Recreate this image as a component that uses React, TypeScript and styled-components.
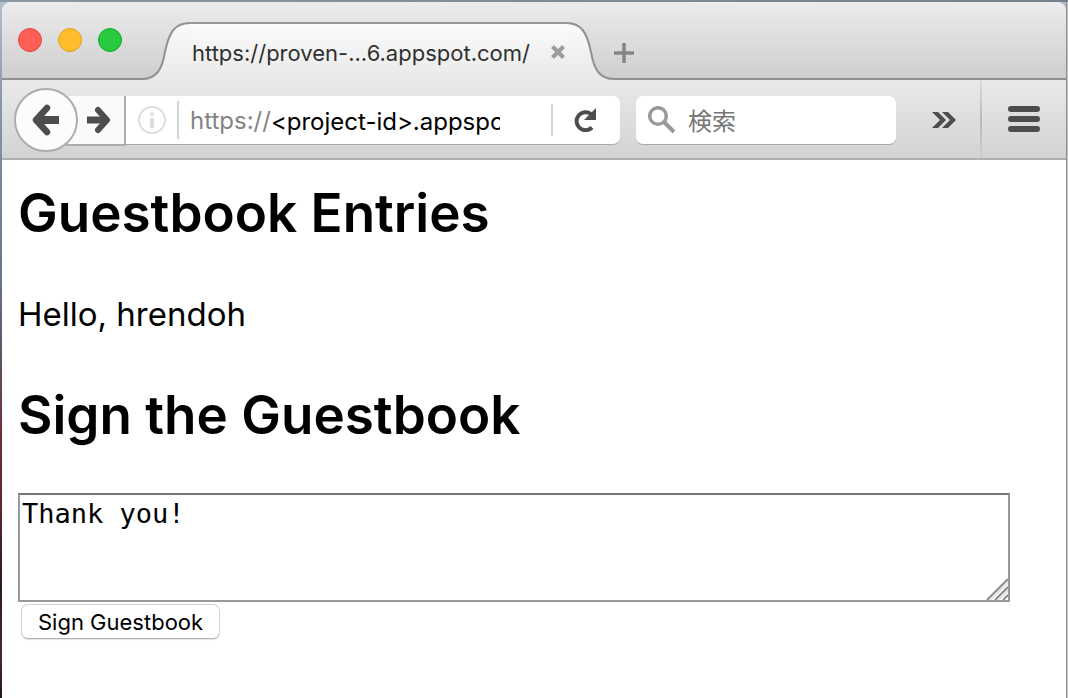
import React from "react";
import styled, { createGlobalStyle } from "styled-components";

const uiFont = `Inter, "Noto Sans CJK JP", sans-serif`;
const pageFont = `Inter, "Noto Sans CJK JP", sans-serif`;

const GlobalStyle = createGlobalStyle`
  * { box-sizing: border-box; }
  body { margin: 0; background: #fff; }
  button, input, textarea { margin: 0; font: inherit; color: inherit; }
  svg { display: block; flex: none; }
`;

const Desktop = styled.div`
  min-height: 100vh;
  display: flex;
  padding: 2px 2px 0;
  background:
    linear-gradient(90deg, #8a98a6, #72818e) 0 0 / 100% 2px no-repeat,
    linear-gradient(90deg, #8e8e8e 50%, #c4c4c4 50%) 100% 0 / 2px 100% no-repeat,
    linear-gradient(#b4c0cc 0, #8795a8 15%, #66758c 40%, #5e5063 52%, #6f3136 62%, #60282b 72%, #2a1a22 84%, #4a2a2e 94%, #22161c 100%);
`;

const Window = styled.div`
  flex: 1;
  min-width: 0;
  display: flex;
  flex-direction: column;
  background: #fff;
  border-radius: 9px 9px 0 0;
  overflow: hidden;
`;

const TabStrip = styled.header`
  height: 78px;
  display: flex;
  align-items: flex-end;
  background: linear-gradient(#ececec, #cecece);
  border-bottom: 2px solid #8f8f8f;
`;

const Lights = styled.div`
  width: 140px;
  align-self: stretch;
  display: flex;
  gap: 16px;
  padding: 26px 0 0 16px;
`;

const Light = styled.button<{ $fill: string; $edge: string }>`
  width: 24px;
  height: 24px;
  padding: 0;
  border: 1px solid ${(p) => p.$edge};
  border-radius: 50%;
  background: ${(p) => p.$fill};
`;

const Tab = styled.div`
  position: relative;
  flex: 0 1 472px;
  min-width: 0;
  height: 58px;
  margin-bottom: -2px;
  display: flex;
`;

const TabBody = styled.div`
  flex: 1;
  min-width: 0;
  display: flex;
  align-items: center;
  justify-content: space-between;
  padding: 0 1px 0 2px;
  border-top: 2px solid #999;
  background: linear-gradient(#fbfbfb, #e9e9e9);
`;

const TabTitle = styled.span`
  padding-top: 2px;
  font: 22px/30px ${uiFont};
  color: #303030;
  white-space: nowrap;
`;

const IconButton = styled.button`
  flex: none;
  display: flex;
  align-items: center;
  justify-content: center;
  padding: 0;
  border: 0;
  background: none;
`;

const NewTab = styled(IconButton)`
  height: 50px;
`;

const Toolbar = styled.nav`
  height: 80px;
  display: flex;
  align-items: center;
  padding: 2px 0 0 12px;
  background: linear-gradient(#e9e9e9, #d3d3d3);
  border-bottom: 2px solid #b0b0b0;
`;

const Back = styled(IconButton)`
  position: relative;
  width: 64px;
  height: 64px;
  border: 2px solid #acacac;
  border-radius: 50%;
  background: #fcfcfc;
`;

const Forward = styled(IconButton)`
  width: 60px;
  height: 50px;
  margin: 2px 0 0 -12px;
  padding-left: 8px;
  border: solid #acacac;
  border-width: 0 2px 2px 0;
  background: #fafafa;
`;

const Field = styled.div`
  height: 49px;
  display: flex;
  align-items: center;
  background: #fff;
  border-bottom: 1px solid #a8a8a8;
  font: 24px/32px ${uiFont};
`;

const AddressField = styled(Field)`
  flex: 1;
  min-width: 0;
  padding: 0 24px 0 12px;
  border-radius: 0 7px 7px 0;
`;

const SearchField = styled(Field)`
  flex: 0 1 260px;
  min-width: 0;
  margin-left: 16px;
  padding: 0 12px;
  gap: 12px;
  border-radius: 7px;
`;

const Divider = styled.span<{ $height: number; $gap: number }>`
  flex: none;
  width: 2px;
  height: ${(p) => p.$height}px;
  margin: 0 ${(p) => p.$gap}px;
  background: #d4d4d4;
`;

const Scheme = styled.label`
  padding-top: 3px;
  color: #848484;
`;

const TextInput = styled.input`
  flex: 1;
  min-width: 0;
  height: 40px;
  padding: 3px 0 0;
  border: 0;
  outline: 0;
  background: none;
  color: #000;
  &::placeholder { color: #757575; opacity: 1; }
`;

const AddressInput = styled(TextInput)`
  margin-right: 30px;
`;

const Overflow = styled(IconButton)`
  width: 84px;
  padding-left: 12px;
  height: 48px;
`;

const Menu = styled(IconButton)`
  align-self: stretch;
  width: 86px;
  margin-top: -2px;
  border-left: 2px solid;
  border-image: linear-gradient(#dedede, #b8b8b8, #cfcfcf) 1;
`;

const Page = styled.main`
  flex: 1;
  padding: 23px 56px 24px 16px;
  font-family: ${pageFont};
  color: #000;
`;

const Heading = styled.h2`
  margin: 0;
  font-size: 53px;
  line-height: 60px;
  font-weight: 600;
`;

const Greeting = styled.p`
  margin: 51px 0;
  font-size: 33px;
  line-height: 40px;
`;

const Form = styled.form`
  margin-top: 48px;
`;

const MessageBox = styled.div`
  position: relative;
`;

const Message = styled.textarea`
  display: block;
  width: 100%;
  height: 109px;
  padding: 2px;
  border: 2px solid #999;
  border-top-color: #757575;
  border-radius: 0;
  outline: 0;
  resize: none;
  font: 27px/34px "DejaVu Sans Mono", monospace;
`;

const Grip = styled.svg`
  position: absolute;
  right: 2px;
  bottom: 2px;
`;

const Submit = styled.button`
  height: 35px;
  margin: 2px 3px;
  padding: 0 16px;
  border: 1px solid #d2d2d2;
  border-bottom-color: #b4b4b4;
  border-radius: 7px;
  background: #fff;
  box-shadow: 0 1px 1px #e4e4e4;
  font: 22px/30px ${uiFont};
`;

const TabEdge = ({ side }: { side: "left" | "right" }) => {
  const id = `tab-${side}`;
  return (
    <svg width="48" height="58" viewBox="0 0 48 58" aria-hidden="true">
      <defs>
        <linearGradient id={id} x1="0" y1="0" x2="0" y2="1">
          <stop offset="0" stopColor="#fbfbfb" />
          <stop offset="1" stopColor="#e9e9e9" />
        </linearGradient>
      </defs>
      <g transform={side === "right" ? "matrix(-1 0 0 1 48 0)" : undefined}>
        <path d="M0 57C14 57 20 48 23 30C27 10 33 1 48 1V58H0Z" fill={`url(#${id})`} />
        <path d="M0 57C14 57 20 48 23 30C27 10 33 1 48 1" fill="none" stroke="#929292" strokeWidth="2" />
      </g>
    </svg>
  );
};

export default function App() {
  return (
    <>
      <GlobalStyle />
      <Desktop>
        <Window>
          <TabStrip>
            <Lights>
              <Light $fill="#ff5f57" $edge="#e2463f" aria-label="Close window" />
              <Light $fill="#ffbd2e" $edge="#e1a116" aria-label="Minimize window" />
              <Light $fill="#28ca42" $edge="#12ac28" aria-label="Zoom window" />
            </Lights>
            <Tab>
              <TabEdge side="left" />
              <TabBody>
                <TabTitle>https://proven-...6.appspot.com/</TabTitle>
                <IconButton aria-label="Close tab">
                  <svg width="14" height="14" viewBox="0 0 14 14" stroke="#9c9c9c" strokeWidth="4">
                    <path d="M1.5 1.5L12.5 12.5M12.5 1.5L1.5 12.5" />
                  </svg>
                </IconButton>
              </TabBody>
              <TabEdge side="right" />
            </Tab>
            <NewTab aria-label="New tab">
              <svg width="20" height="20" viewBox="0 0 20 20" stroke="#858585" strokeWidth="3.500">
                <path d="M10 0V20M0 10H20" />
              </svg>
            </NewTab>
          </TabStrip>

          <Toolbar>
            <Back aria-label="Back">
              <svg width="28" height="32" viewBox="0 0 28 32" fill="none" stroke="#4d4d4d">
                <path d="M5 16H27" strokeWidth="8" />
                <path d="M15 4L4 16L15 28" strokeWidth="6.500" strokeLinecap="round" strokeLinejoin="round" />
              </svg>
            </Back>
            <Forward aria-label="Forward">
              <svg width="24" height="28" viewBox="0 0 24 28" fill="none" stroke="#4d4d4d">
                <path d="M0 14H18" strokeWidth="7" />
                <path d="M11 4L20 14L11 24" strokeWidth="6" strokeLinecap="round" strokeLinejoin="round" />
              </svg>
            </Forward>
            <AddressField>
              <svg width="28" height="28" viewBox="0 0 28 28" fill="#dedede">
                <circle cx="14" cy="14" r="13" fill="none" stroke="#dedede" strokeWidth="2" />
                <circle cx="14" cy="8" r="2" />
                <rect x="12" y="12" width="4" height="10" rx="1" />
              </svg>
              <Divider $height={38} $gap={11} />
              <Scheme htmlFor="address">https://</Scheme>
              <AddressInput id="address" defaultValue="<project-id>.appspot.com" />
              <Divider $height={32} $gap={21} />
              <IconButton aria-label="Reload">
                <svg width="22" height="24" viewBox="0 0 22 24">
                  <path d="M18 19.500A9 9 0 1 1 17 6" fill="none" stroke="#4d4d4d" strokeWidth="4" />
                  <path d="M22 0V12H10Z" fill="#4d4d4d" />
                </svg>
              </IconButton>
            </AddressField>
            <SearchField>
              <svg width="28" height="28" viewBox="0 0 28 28" fill="none" stroke="#999" strokeWidth="3.500">
                <circle cx="10" cy="10" r="8.300" />
                <path d="M16 16L26 26" strokeWidth="4" />
              </svg>
              <TextInput aria-label="検索" placeholder="検索" />
            </SearchField>
            <Overflow aria-label="More tools">
              <svg width="24" height="16" viewBox="0 0 24 16" fill="#4d4d4d">
                <path d="M0 0H6L14 8L6 16H0L8 8Z" />
                <path d="M10 0H16L24 8L16 16H10L18 8Z" />
              </svg>
            </Overflow>
            <Menu aria-label="Menu">
              <svg width="32" height="26" viewBox="0 0 32 26" fill="#4d4d4d">
                <rect width="32" height="6" rx="3" />
                <rect y="10" width="32" height="6" rx="3" />
                <rect y="20" width="32" height="6" rx="3" />
              </svg>
            </Menu>
          </Toolbar>

          <Page>
            <Heading>Guestbook Entries</Heading>
            <Greeting>Hello, hrendoh</Greeting>
            <Heading>Sign the Guestbook</Heading>
            <Form onSubmit={(e) => e.preventDefault()}>
              <MessageBox>
                <Message aria-label="Message" defaultValue="Thank you!" />
                <Grip width="22" height="22" viewBox="0 0 22 22" fill="none">
                  <path d="M1 22L22 1M9 22L22 9M17 22L22 17" stroke="#8a8a8a" strokeWidth="2" />
                  <path d="M4 22L22 4M12 22L22 12" stroke="#e2e2e2" strokeWidth="2" />
                </Grip>
              </MessageBox>
              <Submit type="submit">Sign Guestbook</Submit>
            </Form>
          </Page>
        </Window>
      </Desktop>
    </>
  );
}
